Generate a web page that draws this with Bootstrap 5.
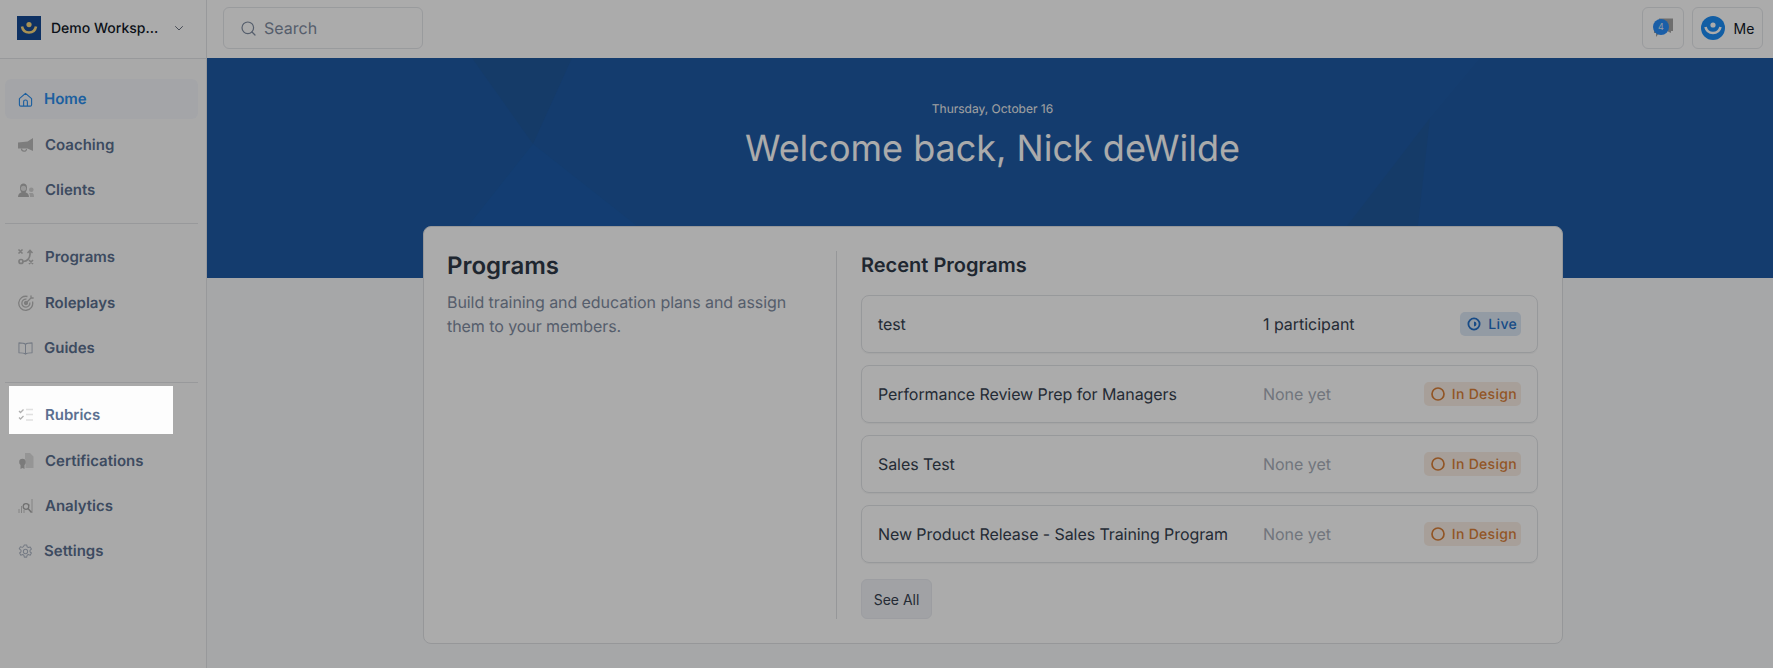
<!doctype html>
<html lang="en"><head><meta charset="utf-8">
<link href="https://cdn.jsdelivr.net/npm/bootstrap@5.3.0/dist/css/bootstrap.min.css" rel="stylesheet">
<style>
html,body{height:100%;overflow:hidden}
body{font-family:Inter,"Noto Sans",sans-serif;background:#f8f9fb;color:#36414f;text-rendering:geometricPrecision;-webkit-font-smoothing:antialiased}
.app-shell{height:668px}
.side{width:207px;background:#fdfdfd;border-right:1px solid #e3e5e8;flex:none}
.brand-bar{height:59px;padding:0 17px 2px;border-bottom:1px solid #e3e5e8;background:#fff}
.brand-logo{width:24px;height:24px;background:#164a94;flex:none}
.brand-name{font-size:14px;font-weight:500;color:#111827;margin-left:10px;white-space:nowrap}
.side-nav{padding:20px 8px 0 5px}
.nav-group{display:flex;flex-direction:column;gap:5.3px}
.side-sep{height:1px;background:#e3e5e8;margin:13.4px 0 13px}
.side-sep.lower{margin:14px 0 12.4px}
.side-link{height:40px;display:flex;align-items:center;border-radius:6px;font-size:15px;font-weight:600;color:#5b7090;text-decoration:none;padding:1px 0 0 13px}
.side-link svg{flex:none;width:15px;height:15px;margin-right:11px;color:#aeb7c5}
.side-link.wide svg{width:16px;height:16px;margin-right:11px;color:#bbb}
.side-link.on{background:#f5f7fb;color:#2b8eee}
.side-link.on svg{color:#2b8eee}
.top-bar{height:58px;background:#fff;padding:0 10px 2px 16px}
.search-box{width:200px;height:42px;border:1px solid #e5e7eb;border-radius:6px;padding-left:17px;color:#7f8ca1;font-size:16px}
.search-box svg{margin-right:8px}
.tool-btn{height:42px;border:1px solid #e5e7eb;border-radius:6px;background:#fff;padding:0}
.chat-btn{width:42px;position:relative}
.me-btn{width:71px;margin-left:8px;font-size:14px;font-weight:400;color:#111827}
.avatar{width:24px;height:24px;margin-right:9px}
.hero{height:220px;background:#1e5aa4;color:#fff;position:relative;overflow:hidden}
.hero-art{position:absolute;inset:0;width:100%;height:100%}
.hero-text{position:relative;text-align:center;padding-left:5px}
.hero-date{font-size:12px;line-height:16px;padding-top:43px;color:#f1f1f1}
.hero-title{font-size:36px;font-weight:400;line-height:44px;margin:9px 0 0}
.prog-card{width:1140px;height:418px;margin:-52px 0 0 216px;position:relative;background:#fff;border:1px solid #e0e2e5;border-radius:8px;padding:24px 24px 24px 23px;display:flex}
.prog-left{width:390px;padding-right:30px;border-right:1px solid #e0e2e5}
.prog-head{font-size:24px;font-weight:600;line-height:30px;margin:0;color:#2f3a48}
.prog-desc{font-size:16px;line-height:24px;color:#7f8ca1;margin:9px 0 0;letter-spacing:-.07px}
.prog-right{flex:1;padding-left:24px}
.recent-head{font-size:20px;font-weight:600;line-height:26px;margin:1px 0 17px;color:#2f3a48}
.prog-row{height:58px;border:1px solid #e2e4e7;border-radius:8px;margin-bottom:12px;padding:0 16px;font-size:16px;color:#36414f;box-shadow:0 1px 1px rgba(0,0,0,.04)}
.row-name{width:385px;white-space:nowrap;letter-spacing:-.08px}
.row-count{flex:1;letter-spacing:-.03px}
.row-none{color:#a9afba}
.state{height:24px;border-radius:5px;padding:0 4px 0 7px;font-size:14px;font-weight:500;letter-spacing:.3px;display:flex;align-items:center;gap:7px}
.state svg{width:14px;height:14px}
.state-live{background:#dbe7f5;color:#2470c8}
.state-design{background:#faeee4;color:#d97f38}
.see-btn{width:71px;height:40px;margin-top:4px;padding:0;font-size:14px;color:#36414f;background:#f0f2f7;border:1px solid #e9ebf0;border-radius:6px}
.dim-hole{position:fixed;left:9px;top:386px;width:164px;height:48px;box-shadow:0 0 0 3000px rgba(0,0,0,.33);pointer-events:none}
</style></head>
<body>
<div class="app-shell d-flex">
 <aside class="side">
  <div class="brand-bar d-flex align-items-center">
   <div class="brand-logo d-flex align-items-center justify-content-center">
    <svg width="18" height="14" viewBox="0 0 18 14"><circle cx="9" cy="3.6" r="2.6" fill="#fbd97e"/><path d="M2 5.500c.8 4 3.500 6 7 6s6.200-2 7-6" fill="none" stroke="#fbd97e" stroke-width="2.600"/></svg>
   </div>
   <div class="brand-name">Demo Worksp...</div>
   <svg class="ms-auto" width="12" height="12" viewBox="0 0 12 12" style="margin-right:4px"><path d="M2.500 4.500 6 8l3.500-3.500" fill="none" stroke="#6b7280" stroke-width="1" stroke-linecap="round" stroke-linejoin="round"/></svg>
  </div>
  <nav class="side-nav">
   <div class="nav-group">
    <a class="side-link on" href="#"><svg viewBox="0 0 16 16" fill="none" stroke="currentColor" stroke-width="1.200" stroke-linejoin="round"><path d="M1.500 7 8 1.500 14.500 7v6.500a1.500 1.500 0 0 1-1.500 1.500H3a1.500 1.500 0 0 1-1.500-1.500z"/><path d="M6 15V10.500a2 2 0 0 1 4 0V15"/></svg>Home</a>
    <a class="side-link wide" href="#"><svg viewBox="0 0 16 16" fill="currentColor"><path d="M0 5.500 9.500 4.500 15 1v13L9.500 11.500H0z"/><path d="M3.500 11.500c0 3.500 5 3.500 5 .5" fill="none" stroke="currentColor" stroke-width="1.200"/></svg>Coaching</a>
    <a class="side-link wide" href="#"><svg viewBox="0 0 16 16"><path d="M0 15c0-3 1.500-4 3.500-4.800C2.300 9 2 7.500 2 5.500 2 3 3.500 1.500 5.500 1.500S9 3 9 5.500c0 2-.3 3.500-1.500 4.700 2 .8 3.500 1.800 3.500 4.800z" fill="#b5b5b5"/><circle cx="5.500" cy="6.300" r="2.600" fill="#e4e4e4"/><circle cx="13.300" cy="7.800" r="2.300" fill="#d4d4d4"/><path d="M12 15c0-2-.3-3-1-4h3.500c1 .5 1.500 1.800 1.500 4z" fill="#d4d4d4"/></svg>Clients</a>
   </div>
   <div class="side-sep"></div>
   <div class="nav-group">
    <a class="side-link wide" href="#"><svg viewBox="0 0 16 16" fill="none" stroke="currentColor" stroke-width="1.700" stroke-linecap="round"><path d="M1 1l3 3M4 1 1 4M11.500 11.500l3 3M14.500 11.500l-3 3"/><circle cx="3" cy="12.500" r="2"/><path d="M5.500 12.500c3.500 0 6.500-3 6.500-7.500V2M10 3.500 12 1.500l2 2"/></svg>Programs</a>
    <a class="side-link wide" href="#"><svg viewBox="0 0 16 16" fill="none" stroke="currentColor" stroke-width="1.300"><path d="M14.500 6.500a7 7 0 1 1-5-5"/><path d="M11.800 7.500a4 4 0 1 1-3.300-3.300"/><circle cx="8" cy="8" r="1.500" fill="currentColor"/><path d="M8 8l5-5M13 3V.8M13 3h2.200" stroke-linecap="round"/></svg>Roleplays</a>
    <a class="side-link" href="#"><svg viewBox="0 0 16 16" fill="none" stroke="currentColor" stroke-width="1.100" stroke-linejoin="round"><path d="M8 3.500C6.800 2.300 4.500 2 1 2v10.500c3.500 0 5.800.3 7 1.500 1.200-1.200 3.500-1.500 7-1.500V2c-3.500 0-5.800.3-7 1.500zM8 3.500V14"/></svg>Guides</a>
   </div>
   <div class="side-sep lower"></div>
   <div class="nav-group">
    <a class="side-link wide" href="#"><svg viewBox="0 0 16 16" fill="none" stroke-width="1.300"><path d="M1 4l1.500 1.500L5.500 2.500M1 10.500 2.500 12l3-3" stroke="#b0b0b0"/><path d="M8 2.500h7M8 7.500h7M8 13h7" stroke="#e0e0e0"/></svg>Rubrics</a>
    <a class="side-link wide" href="#"><svg viewBox="0 0 16 16"><path d="M7 0h5l3.500 3.500V15H7.500v-4.500c1-1.500.5-3.500-.5-4.500z" fill="#dedede"/><circle cx="4.500" cy="9" r="3.300" fill="#b8b8b8"/><path d="M2.500 11h4v5l-2-1-2 1z" fill="#b8b8b8"/></svg>Certifications</a>
    <a class="side-link wide" href="#"><svg viewBox="0 0 16 16" fill="none" stroke="#c4c4c4" stroke-width="1"><path d="M1 11v4M3.500 8v7M6 12v3M11 6v2M14 1v14"/><circle cx="8" cy="8.500" r="2.800" stroke="#a8a8a8" stroke-width="1.300"/><path d="M10 10.500l3.500 4" stroke="#a8a8a8" stroke-width="1.500"/></svg>Analytics</a>
    <a class="side-link" href="#"><svg viewBox="0 0 16 16" fill="none" stroke="currentColor" stroke-width="1.100" stroke-linejoin="round"><circle cx="8" cy="8" r="2.300"/><path d="M6.700 1h2.600l.4 2 1.400.8 1.900-.7 1.300 2.300-1.500 1.300v1.600l1.500 1.300-1.300 2.300-1.900-.7-1.400.8-.4 2H6.700l-.4-2-1.400-.8-1.900.7-1.300-2.300 1.500-1.300V6.500L1.300 5.200l1.300-2.300 1.900.7 1.400-.8z"/></svg>Settings</a>
   </div>
  </nav>
 </aside>
 <main class="flex-grow-1">
  <header class="top-bar d-flex align-items-center">
   <div class="search-box d-flex align-items-center">
    <svg width="15" height="15" viewBox="0 0 15 15" fill="none" stroke="#7f8ca1" stroke-width="1.200" stroke-linecap="round"><circle cx="6.800" cy="6.800" r="5.800"/><path d="m11 11 3 3"/></svg>
    <span>Search</span>
   </div>
   <button class="tool-btn chat-btn ms-auto d-flex align-items-center justify-content-center" type="button" aria-label="Messages, 4 unread">
    <svg width="20" height="20" viewBox="0 0 20 20"><path d="M6 .5h14v12.500h-2v2l-4-2H6z" fill="#a4a4a4"/><path d="M1 8h8v7H6l-3 4v-4H1z" fill="#a0a0a0"/><circle cx="8" cy="9" r="8" fill="#288dfa"/><text x="8" y="12.300" text-anchor="middle" font-size="9" font-family="Inter" fill="#dfe8f6">4</text></svg>
   </button>
   <button class="tool-btn me-btn d-flex align-items-center justify-content-center" type="button">
    <svg class="avatar" viewBox="0 0 24 24"><circle cx="12" cy="12" r="12" fill="#1c8cf5"/><circle cx="12" cy="9" r="2.600" fill="#fff"/><path d="M4.500 11c1 4 3.800 6 7.500 6s6.500-2 7.500-6" fill="none" stroke="#fff" stroke-width="2.600"/></svg>Me
   </button>
  </header>
  <section class="hero">
   <svg class="hero-art" viewBox="0 0 1566 220" preserveAspectRatio="none" aria-hidden="true">
    <path d="M265 0h100l-39 86z" fill="#20589c"/>
    <path d="M326 86 496 220H220z" fill="#1d5caa"/>
    <path d="M1223 0h50l-50 60z" fill="#1f5ca8"/>
    <path d="M1223 60 1205 220H1100z" fill="#20589c"/>
   </svg>
   <div class="hero-text">
    <div class="hero-date">Thursday, October 16</div>
    <h1 class="hero-title">Welcome back, Nick deWilde</h1>
   </div>
  </section>
  <section class="prog-card">
   <div class="prog-left">
    <h2 class="prog-head">Programs</h2>
    <p class="prog-desc">Build training and education plans and assign them to your members.</p>
   </div>
   <div class="prog-right">
    <h3 class="recent-head">Recent Programs</h3>
    <div class="prog-row d-flex align-items-center"><div class="row-name">test</div><div class="row-count">1 participant</div>
     <div class="state state-live"><svg viewBox="0 0 14 14" fill="none" stroke="currentColor" stroke-width="1.800"><circle cx="7" cy="7" r="5.600"/><path d="M7 4.500a2.500 2.500 0 0 1 0 5z" fill="currentColor" stroke="none"/></svg>Live</div></div>
    <div class="prog-row d-flex align-items-center"><div class="row-name">Performance Review Prep for Managers</div><div class="row-count row-none">None yet</div>
     <div class="state state-design"><svg viewBox="0 0 14 14" fill="none" stroke="currentColor" stroke-width="1.700"><circle cx="7" cy="7" r="6"/></svg>In Design</div></div>
    <div class="prog-row d-flex align-items-center"><div class="row-name">Sales Test</div><div class="row-count row-none">None yet</div>
     <div class="state state-design"><svg viewBox="0 0 14 14" fill="none" stroke="currentColor" stroke-width="1.700"><circle cx="7" cy="7" r="6"/></svg>In Design</div></div>
    <div class="prog-row d-flex align-items-center"><div class="row-name">New Product Release - Sales Training Program</div><div class="row-count row-none">None yet</div>
     <div class="state state-design"><svg viewBox="0 0 14 14" fill="none" stroke="currentColor" stroke-width="1.700"><circle cx="7" cy="7" r="6"/></svg>In Design</div></div>
    <button class="btn see-btn" type="button">See All</button>
   </div>
  </section>
 </main>
</div>
<div class="dim-hole"></div>
<script src="https://cdn.jsdelivr.net/npm/bootstrap@5.3.0/dist/js/bootstrap.bundle.min.js"></script>
</body></html>
